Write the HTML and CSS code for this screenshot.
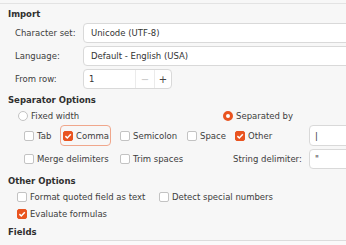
FILE: index.html
```html
<!DOCTYPE html>
<html lang="en">
<head>
    <meta charset="UTF-8">
    <title>Text Import</title>
    <link rel="stylesheet" href="styles.css">
</head>
<body>
    <div class="page">
        <!-- Import -->
        <h2 class="section-title">Import</h2>
        <div class="form-grid">
            <label class="form-label">Character set:</label>
            <div class="field">Unicode (UTF-8)</div>

            <label class="form-label">Language:</label>
            <div class="field">Default - English (USA)</div>

            <label class="form-label">From row:</label>
            <div class="spin">
                <span class="spin-value">1</span>
                <span class="spin-btn spin-minus">&minus;</span>
                <span class="spin-btn spin-plus">+</span>
            </div>
        </div>

        <!-- Separator Options -->
        <h2 class="section-title title-sep">Separator Options</h2>
        <div class="radio-row">
            <label class="opt opt-fixed"><span class="radio"></span>Fixed width</label>
            <label class="opt opt-separated"><span class="radio checked"></span>Separated by</label>
        </div>
        <div class="sep-grid">
            <label class="opt"><span class="check"></span>Tab</label>
            <label class="opt opt-focus"><span class="check checked"></span>Comma</label>
            <label class="opt"><span class="check"></span>Semicolon</label>
            <label class="opt"><span class="check"></span>Space</label>
            <label class="opt"><span class="check checked"></span>Other</label>
            <div class="field field-small">|</div>

            <label class="opt span-2"><span class="check"></span>Merge delimiters</label>
            <label class="opt span-2"><span class="check"></span>Trim spaces</label>
            <label class="opt opt-delim">String delimiter:</label>
            <div class="field field-small">"</div>
        </div>

        <!-- Other Options -->
        <h2 class="section-title title-other">Other Options</h2>
        <div class="other-row">
            <label class="opt opt-quoted"><span class="check"></span>Format quoted field as text</label>
            <label class="opt"><span class="check"></span>Detect special numbers</label>
        </div>
        <div class="other-row other-row-2">
            <label class="opt opt-quoted"><span class="check checked"></span>Evaluate formulas</label>
        </div>

        <!-- Fields -->
        <h2 class="section-title title-fields">Fields</h2>
        <div class="fields-box"></div>
    </div>
</body>
</html>
```

FILE: styles.css
```css
/* Base Reset */
* {
    margin: 0;
    padding: 0;
    box-sizing: border-box;
}

html,
body {
    overflow: hidden;
}

body {
    font-family: "DejaVu Sans", sans-serif;
    font-size: 8.5px;
    color: #3d3d3d;
    background-color: #f7f7f7;
    width: 346px;
    height: 245px;
}

.page {
    width: 346px;
    height: 242px;
    overflow: hidden;
    margin-top: 3px;
    border-top: 1px solid #e3e3e3;
}

/* Section titles */
.section-title {
    font-size: 8.5px;
    font-weight: bold;
    color: #2f2f2f;
    height: 11px;
    line-height: 11px;
    padding-left: 8px;
    margin-top: 5px;
}

.title-sep {
    margin-top: 6px;
}

.title-other {
    margin-top: 7px;
}

.title-fields {
    margin-top: 7px;
}

/* Import form */
.form-grid {
    display: grid;
    grid-template-columns: 68px 1fr;
    grid-auto-rows: 20px;
    row-gap: 3px;
    margin-top: 3px;
    margin-right: -40px;
    padding-left: 15px;
}

.form-label {
    display: flex;
    align-items: center;
}

.field {
    display: flex;
    align-items: center;
    background: #fff;
    border: 1px solid #d9d9d9;
    border-radius: 4px;
    padding-left: 7px;
    color: #333;
}

.spin {
    display: flex;
    width: 89px;
    background: #fff;
    border: 1px solid #d9d9d9;
    border-radius: 4px;
}

.spin-value {
    flex: 1;
    display: flex;
    align-items: center;
    padding-left: 5px;
    color: #333;
}

.spin-btn {
    display: flex;
    align-items: center;
    justify-content: center;
    border-left: 1px solid #ebebeb;
    font-size: 10px;
}

.spin-minus {
    width: 19px;
    color: #c4c4c4;
}

.spin-plus {
    width: 17px;
    color: #444;
}

/* Options */
.opt {
    display: flex;
    align-items: center;
    white-space: nowrap;
}

.check,
.radio {
    flex: none;
    width: 10px;
    height: 10px;
    margin-right: 3px;
    background: #fff;
    border: 1px solid #c3c3c3;
}

.check {
    border-radius: 2px;
}

.check.checked {
    background: #e95420 url("data:image/svg+xml,%3Csvg xmlns='http://www.w3.org/2000/svg' viewBox='0 0 10 10'%3E%3Cpath d='M2.4 5.1 L4.3 7 L7.8 3.3' fill='none' stroke='%23fff' stroke-width='1.5'/%3E%3C/svg%3E") center / 10px 10px no-repeat;
    border-color: #e95420;
}

.radio {
    border-radius: 50%;
}

.radio.checked {
    background: #fff;
    border: 3px solid #e95420;
}

.radio-row {
    display: flex;
    height: 12px;
    margin-top: 4px;
}

.opt-fixed {
    padding-left: 18px;
    width: 223px;
}

.sep-grid {
    display: grid;
    grid-template-columns: 36px 60px 67px 48px 74px 1fr;
    grid-template-rows: 21px 20px;
    row-gap: 3px;
    margin-top: 3px;
    margin-right: -40px;
    padding-left: 24px;
}

.opt-focus {
    border: 1px solid #f0a78c;
    border-radius: 4px;
    padding-left: 2px;
    width: 51px;
}

.span-2 {
    grid-column: span 2;
}

.opt-delim {
    margin-left: -2px;
}

.field-small {
    padding-left: 5px;
}

.other-row {
    display: flex;
    height: 12px;
    margin-top: 4px;
}

.other-row-2 {
    margin-top: 5px;
}

.opt-quoted {
    padding-left: 17px;
    width: 159px;
}

.fields-box {
    margin-top: 2px;
    margin-left: 80px;
    margin-right: -40px;
    height: 10px;
    border-top: 1px solid #dcdcdc;
    background: #fafafa;
}
```
